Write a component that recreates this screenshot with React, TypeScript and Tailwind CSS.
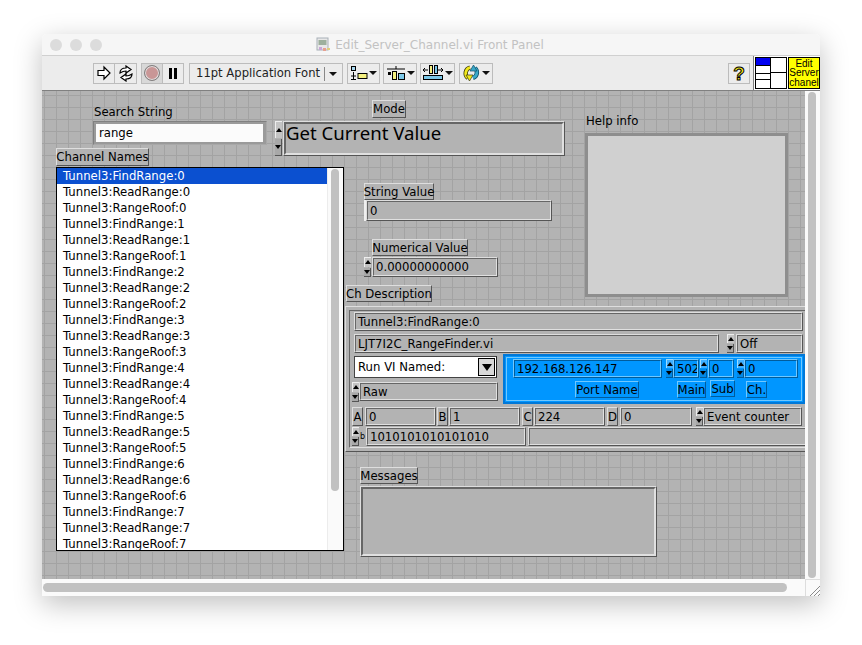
import React from 'react';

const FieldBox: React.FC<{ className: string; text?: string; thick?: boolean; blue?: boolean }> = ({ className, text, thick, blue }) => (
  <div className={`shrink-0 border ${blue ? 'bg-[#0096ff] border-t-[#70c8ff] border-l-[#70c8ff] border-b-[#005c9c] border-r-[#005c9c]' : 'bg-[#b3b3b3] border-t-[#dedede] border-l-[#dedede] border-b-[#555555] border-r-[#555555]'} ${className}`}>
    <div className={`h-full w-full flex items-center pl-[2px] overflow-hidden whitespace-nowrap text-black ${thick ? 'border-2' : 'border'} ${blue ? 'border-t-[#005c9c] border-l-[#005c9c] border-b-[#70c8ff] border-r-[#70c8ff]' : 'border-t-[#666666] border-l-[#666666] border-b-[#e0e0e0] border-r-[#e0e0e0]'}`}>
      {text}
    </div>
  </div>
);

const Caption: React.FC<{ className: string; text: string; blue?: boolean }> = ({ className, text, blue }) => (
  <div className={`shrink-0 flex items-center justify-center whitespace-nowrap border text-black ${blue ? 'bg-[#0096ff] border-t-[#70c8ff] border-l-[#70c8ff] border-b-[#005c9c] border-r-[#005c9c]' : 'bg-[#b3b3b3] border-t-[#dedede] border-l-[#dedede] border-b-[#555555] border-r-[#555555]'} ${className}`}>
    {text}
  </div>
);

const Spinner: React.FC<{ className: string; blue?: boolean }> = ({ className, blue }) => (
  <div className={`shrink-0 w-[7px] flex flex-col gap-px ${className}`}>
    <div className={`flex-1 border-t border-l flex items-center justify-center ${blue ? 'bg-[#40b0ff] border-t-[#a0dcff] border-l-[#a0dcff]' : 'bg-[#c4c4c4] border-t-[#eeeeee] border-l-[#eeeeee]'}`}>
      <div className="w-0 h-0 border-x-[3px] border-x-transparent border-b-[4px] border-b-black" />
    </div>
    <div className={`flex-1 border-b border-r flex items-center justify-center ${blue ? 'bg-[#0088e8] border-b-[#005c9c] border-r-[#005c9c]' : 'bg-[#a8a8a8] border-b-[#555555] border-r-[#555555]'}`}>
      <div className="w-0 h-0 border-x-[3px] border-x-transparent border-t-[4px] border-t-black" />
    </div>
  </div>
);

const ToolButton: React.FC<{ className?: string; children: React.ReactNode }> = ({ className = '', children }) => (
  <div className={`h-[21px] flex items-center justify-center border border-[#bcbcbc] ${className}`}>{children}</div>
);

const Caret = () => <div className="ml-px w-0 h-0 border-x-[4px] border-x-transparent border-t-[4px] border-t-[#111111]" />;

const names: string[] = [];
for (let i = 0; i < 8; i++) {
  names.push(`Tunnel3:FindRange:${i}`, `Tunnel3:ReadRange:${i}`, `Tunnel3:RangeRoof:${i}`);
}

export default function App() {
  return (
    <div className="w-[862px] h-[645px] bg-white pt-[34px] pl-[42px] overflow-hidden font-['DejaVu_Sans',sans-serif] text-[11.7px] leading-[14px]">
      <div className="w-[778px] h-[562px] flex flex-col bg-white rounded-t-[5px] shadow-[0_8px_28px_rgba(0,0,0,0.25)] overflow-hidden">
        {/* title bar */}
        <div className="h-[22px] shrink-0 bg-[#f6f6f6] border-b border-[#d0d0d0] relative flex items-center justify-center gap-[4px] pr-[2px]">
          <div className="absolute left-[8px] top-[5px] flex gap-[8px]">
            <div className="w-[12px] h-[12px] rounded-full bg-[#dcdcdc]" />
            <div className="w-[12px] h-[12px] rounded-full bg-[#dcdcdc]" />
            <div className="w-[12px] h-[12px] rounded-full bg-[#dcdcdc]" />
          </div>
          <svg width="15" height="15" viewBox="0 0 15 15">
            <rect x="1" y="1" width="11" height="12" fill="#e8e8e8" stroke="#a8b0b8" />
            <rect x="2.500" y="3" width="8" height="5" fill="#9db09d" />
            <rect x="3" y="10" width="3" height="3" fill="#c8a8d8" />
            <rect x="7" y="11" width="3" height="3" fill="#e8a090" />
            <rect x="11" y="11" width="3" height="2" fill="#e0d080" />
          </svg>
          <span className="text-[12px] text-[#c2c2c2]">Edit_Server_Channel.vi Front Panel</span>
        </div>

        {/* toolbar */}
        <div className="h-[35px] shrink-0 bg-[#ececec] border-b border-[#808080] flex items-center pl-[51px] relative">
          <ToolButton className="w-[22px]">
            <svg width="16" height="16" viewBox="0 0 16 16"><path d="M2 5.500h6V2l6 6-6 6v-3.500H2z" fill="#fff" stroke="#000" strokeWidth="1.200" /></svg>
          </ToolButton>
          <ToolButton className="w-[22px] border-l-0">
            <svg width="18" height="17" viewBox="0 0 18 17" fill="none" stroke="#000" strokeWidth="1.200">
              <path d="M3 8c0-3 2-5 6-5V1l5 3.500L9 8V6C6 6 4.500 7 3 8z" fill="#fff" />
              <path d="M15 9c0 3-2 5-6 5v2l-5-3.500L9 9v2c3 0 4.500-1 6-2z" fill="#fff" />
            </svg>
          </ToolButton>
          <ToolButton className="w-[22px] ml-[4px] bg-[#d8d8d8]">
            <div className="w-[16px] h-[16px] rounded-full bg-[#c99696] border border-[#808080] shadow-[inset_0_0_0_1px_#e0e0e0]" />
          </ToolButton>
          <ToolButton className="w-[21px] border-l-0 gap-[2px]">
            <div className="w-[3px] h-[11px] bg-black" />
            <div className="w-[3px] h-[11px] bg-black" />
          </ToolButton>
          <ToolButton className="w-[154px] ml-[5px] justify-start pl-[6px] text-[11.6px] text-[#222222] relative">
            11pt Application Font
            <div className="absolute left-[134px] top-[3px] h-[14px] w-px bg-[#888888]" />
            <div className="absolute left-[139px] top-[8px] w-0 h-0 border-x-[4px] border-x-transparent border-t-[4px] border-t-[#111111]" />
          </ToolButton>
          <ToolButton className="w-[33px] ml-[4px]">
            <svg width="18" height="17" viewBox="0 0 18 17">
              <rect x="1.500" y="1.500" width="4" height="4" fill="#a8d8f0" stroke="#000" />
              <path d="M3.500 7v2M1 11h5M3.500 9v5M1 14.500h5" stroke="#000" fill="none" />
              <rect x="8" y="8.500" width="9" height="5" fill="#f4f080" stroke="#000" />
            </svg>
            <Caret />
          </ToolButton>
          <ToolButton className="w-[34px] ml-[3px]">
            <svg width="20" height="17" viewBox="0 0 20 17">
              <path d="M1 4h18M10 1v3" stroke="#000" fill="none" />
              <rect x="2" y="7" width="3" height="3" fill="#000" />
              <rect x="6.500" y="6.500" width="4" height="8" fill="#f4f080" stroke="#000" />
              <rect x="12.500" y="8.500" width="6" height="6" fill="#7cc8e8" stroke="#000" />
            </svg>
            <Caret />
          </ToolButton>
          <ToolButton className="w-[35px] ml-[3px]">
            <svg width="22" height="18" viewBox="0 0 22 18">
              <path d="M1 6h5M16 6h5M1 6l2-2M1 6l2 2M21 6l-2-2M21 6l-2 2" stroke="#000" fill="none" />
              <rect x="7.500" y="1.500" width="3" height="8" fill="#f4f080" stroke="#000" />
              <rect x="12.500" y="1.500" width="3" height="8" fill="#7cc8e8" stroke="#000" />
              <rect x="1.500" y="11.500" width="19" height="4" fill="#7cc8e8" stroke="#000" />
            </svg>
            <Caret />
          </ToolButton>
          <ToolButton className="w-[34px] ml-[4px]">
            <svg width="19" height="18" viewBox="0 0 19 18" fill="none" strokeLinecap="butt">
              <path d="M8 3.500A6 6 0 0 0 6 14" stroke="#3a3a10" strokeWidth="4.400" />
              <path d="M8 3.500A6 6 0 0 0 6 14" stroke="#f2e81c" strokeWidth="2.800" />
              <path d="M4 11h7l-3.500 6z" fill="#f2e81c" stroke="#3a3a10" strokeWidth="0.700" />
              <path d="M11 14A6 6 0 0 0 13 4" stroke="#0c4c68" strokeWidth="4.400" />
              <path d="M11 14A6 6 0 0 0 13 4" stroke="#3aa8c8" strokeWidth="2.800" />
              <path d="M15 7H8l3.500-6z" fill="#3aa8c8" stroke="#0c4c68" strokeWidth="0.700" />
            </svg>
            <Caret />
          </ToolButton>
          <ToolButton className="absolute left-[686px] top-[7px] w-[22px]">
            <span className="text-[19px] font-bold text-[#f2e81c] [-webkit-text-stroke:1px_#000000] font-['Liberation_Sans',sans-serif]">?</span>
          </ToolButton>
          {/* connector pane and vi icon */}
          <div className="absolute left-[711px] top-0 h-full w-[67px] border-l border-[#808080] bg-white flex items-center gap-px pl-px">
            <div className="w-[32px] h-[32px] border border-black grid grid-cols-2 bg-white">
              <div className="grid grid-rows-[8px_8px_6px_1fr] border-r border-black">
                <div className="bg-[#0000f0] border-b border-black" />
                <div className="border-b border-black" />
                <div className="border-b border-black" />
                <div />
              </div>
              <div className="grid grid-rows-[15px_1fr]">
                <div className="border-b border-black" />
                <div />
              </div>
            </div>
            <div className="w-[32px] h-[32px] border border-black bg-[#ffff00] flex flex-col items-center justify-center text-[10px] leading-[9.500px] text-black font-['Liberation_Sans',sans-serif]">
              <span>Edit</span>
              <span>Server</span>
              <span>chanel</span>
            </div>
          </div>
        </div>

        <div className="flex-1 flex min-h-0">
          {/* front panel canvas, controls sit where they were dropped */}
          <div className="relative w-[763px] overflow-hidden bg-[#b3b3b3] bg-[linear-gradient(#a3a3a3_1px,transparent_1px),linear-gradient(90deg,#a3a3a3_1px,transparent_1px)] bg-[size:12px_12px] bg-[position:2px_4px]">
            <div className="absolute left-[52px] top-[14px] text-black">Search String</div>
            <div className="absolute left-[51px] top-[30px] w-[174px] h-[24px] bg-[#9a9a9a] border border-t-[#808080] border-l-[#808080] border-b-[#a8a8a8] border-r-[#a8a8a8] p-[2px]">
              <div className="h-full w-[167px] bg-[#fbfbfb] flex items-center pl-[3px] text-black">range</div>
            </div>

            <Caption className="absolute left-[330px] top-[9px] w-[34px] h-[18px]" text="Mode" />
            <Spinner className="absolute left-[233px] top-[30px] h-[35px]" />
            <div className="absolute left-[241px] top-[30px] w-[282px] h-[35px] bg-[#b3b3b3] border border-t-[#dedede] border-l-[#dedede] border-b-[#555555] border-r-[#555555]">
              <div className="h-full w-full border-2 border-t-[#666666] border-l-[#666666] border-b-[#e0e0e0] border-r-[#e0e0e0] text-[18.600px] leading-[18px] text-black font-['Noto_Sans',sans-serif] whitespace-nowrap">
                Get Current Value
              </div>
            </div>

            <Caption className="absolute left-[14px] top-[57px] w-[93px] h-[18px]" text="Channel Names" />
            <div className="absolute left-[14px] top-[76px] w-[288px] h-[384px] bg-white border border-black flex overflow-hidden">
              <div className="flex-1 min-w-0">
                {names.map((name, i) => (
                  <div key={name} className={`h-[16px] flex items-center pl-[6px] whitespace-nowrap ${i === 0 ? 'bg-[#0b50d0] text-white' : 'text-black'}`}>
                    {name}
                  </div>
                ))}
              </div>
              <div className="w-[16px] shrink-0 bg-[#fafafa] border-l border-[#ececec] pt-px">
                <div className="ml-[3px] w-[8px] h-[322px] rounded-full bg-[#c1c1c1]" />
              </div>
            </div>

            <div className="absolute left-[544px] top-[23px] text-black">Help info</div>
            <div className="absolute left-[543px] top-[42px] w-[203px] h-[164px] bg-[#d0d0d0] border-[3px] border-[#8e8e8e]" />

            <Caption className="absolute left-[322px] top-[92px] w-[70px] h-[17px]" text="String Value" />
            <div className="absolute left-[322px] top-[109px] w-[188px] h-[21px] flex">
              <div className="w-[2px] bg-[#efefef]" />
              <FieldBox className="flex-1" text="0" />
            </div>

            <Caption className="absolute left-[330px] top-[148px] w-[96px] h-[17px]" text="Numerical Value" />
            <Spinner className="absolute left-[322px] top-[166px] h-[20px]" />
            <FieldBox className="absolute left-[330px] top-[166px] w-[126px] h-[20px]" text="0.00000000000" />

            <Caption className="absolute left-[304px] top-[194px] w-[86px] h-[17px]" text="Ch Description" />

            {/* cluster */}
            <div className="absolute left-[303px] top-[215px] w-[480px] h-[146px] bg-[#b3b3b3] border border-t-[#dedede] border-l-[#dedede] border-b-[#555555] border-r-[#555555] p-[3px]">
              <div className="h-full w-full border border-t-[#666666] border-l-[#666666] border-b-[#e0e0e0] border-r-[#e0e0e0] pl-[2px] pt-px flex flex-col">
                <FieldBox className="ml-[2px] w-[449px] h-[19px]" text="Tunnel3:FindRange:0" />
                <div className="flex items-start ml-[2px] mt-[3px]">
                  <FieldBox className="w-[365px] h-[19px]" text="LJT7I2C_RangeFinder.vi" />
                  <Spinner className="ml-[8px] h-[19px]" />
                  <FieldBox className="ml-[2px] w-[67px] h-[19px]" text="Off" />
                </div>
                <div className="flex items-start mt-px">
                  <div className="w-[146px] shrink-0 pt-[2px] flex flex-col gap-[4px]">
                    <div className="relative ml-[2px] w-[143px] h-[22px] bg-white border border-[#444444] border-r-[#222222] flex items-center pl-[3px] text-black">
                      Run VI Named:
                      <div className="absolute right-px top-px w-[17px] h-[18px] bg-[#d8d8d8] border border-black flex items-center justify-center">
                        <div className="w-0 h-0 border-x-[5px] border-x-transparent border-t-[7px] border-t-black" />
                      </div>
                    </div>
                    <div className="flex">
                      <Spinner className="h-[20px]" />
                      <FieldBox className="w-[139px] h-[19px]" text="Raw" />
                    </div>
                  </div>
                  <div className="ml-[5px] w-[302px] h-[50px] shrink-0 bg-[#0096ff] border-2 border-[#0078d8] outline outline-1 outline-offset-[-4px] outline-[#70c8ff] pl-[8px] pt-[3px] flex flex-col">
                    <div className="flex">
                      <FieldBox blue className="w-[149px] h-[19px]" text="192.168.126.147" />
                      <Spinner blue className="ml-[4px] h-[19px]" />
                      <FieldBox blue className="w-[26px] h-[19px]" text="502" />
                      <Spinner blue className="ml-px h-[19px]" />
                      <FieldBox blue className="ml-px w-[26px] h-[19px]" text="0" />
                      <Spinner blue className="ml-[3px] h-[19px]" />
                      <FieldBox blue className="w-[54px] h-[19px]" text="0" />
                    </div>
                    <div className="flex items-start mt-[2px]">
                      <Caption blue className="ml-[62px] mt-px w-[64px] h-[17px]" text="Port Name" />
                      <Caption blue className="ml-[38px] mt-px w-[29px] h-[17px]" text="Main" />
                      <Caption blue className="ml-[4px] w-[25px] h-[17px]" text="Sub" />
                      <Caption blue className="ml-[11px] mt-px w-[21px] h-[17px]" text="Ch." />
                    </div>
                  </div>
                </div>
                <div className="flex mt-[3px]">
                  <Caption className="w-[11px] h-[19px]" text="A" />
                  <FieldBox className="ml-[2px] w-[71px] h-[19px]" text="0" />
                  <Caption className="ml-px w-[11px] h-[19px]" text="B" />
                  <FieldBox className="ml-px w-[71px] h-[19px]" text="1" />
                  <Caption className="ml-[2px] w-[11px] h-[19px]" text="C" />
                  <FieldBox className="ml-px w-[71px] h-[19px]" text="224" />
                  <Caption className="ml-[2px] w-[11px] h-[19px]" text="D" />
                  <FieldBox className="ml-[2px] w-[72px] h-[19px]" text="0" />
                  <Spinner className="ml-[4px] h-[19px]" />
                  <FieldBox className="w-[99px] h-[19px]" text="Event counter" />
                </div>
                <div className="flex mt-px">
                  <Spinner className="h-[19px]" />
                  <div className="w-[7px] h-[19px] flex items-center justify-center text-[8px] text-black">b</div>
                  <FieldBox className="w-[160px] h-[19px]" text="1010101010101010" />
                  <FieldBox className="ml-[2px] w-[280px] h-[19px]" />
                </div>
              </div>
            </div>

            <Caption className="absolute left-[318px] top-[376px] w-[58px] h-[17px]" text="Messages" />
            <FieldBox thick className="absolute left-[318px] top-[395px] w-[297px] h-[71px]" />
          </div>

          {/* right scrollbar */}
          <div className="w-[15px] shrink-0 bg-[#fafafa] pl-[3px] pt-px">
            <div className="w-[8px] h-[486px] rounded-full bg-[#c1c1c1]" />
          </div>
        </div>

        {/* bottom scrollbar */}
        <div className="h-[17px] shrink-0 bg-[#fafafa] flex items-center pl-px relative">
          <div className="w-[744px] h-[9px] rounded-full bg-[#c1c1c1]" />
          <div className="absolute right-0 top-0 w-[15px] h-[17px] border-l border-t border-[#dddddd] flex items-end justify-end">
            <svg width="11" height="11" viewBox="0 0 11 11" stroke="#8a8a8a" fill="none">
              <path d="M1 11L11 1M5 11L11 5M9 11l2-2" />
            </svg>
          </div>
        </div>
      </div>
    </div>
  );
}
